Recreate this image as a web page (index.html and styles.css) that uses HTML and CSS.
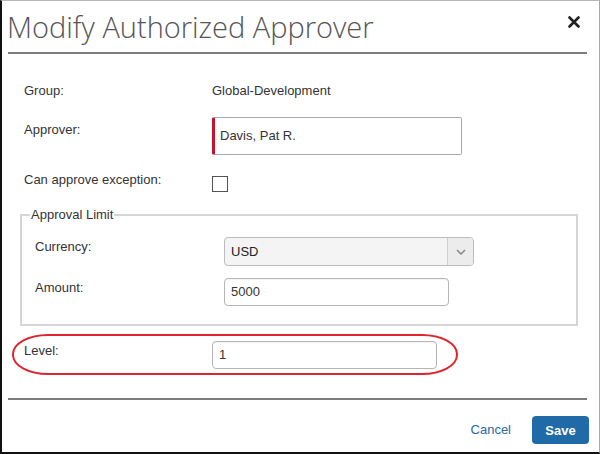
FILE: index.html
```html
<!DOCTYPE html>
<html>
<head>
<meta charset="utf-8">
<link rel="stylesheet" href="styles.css">
</head>
<body>
<div class="dialog">
  <div class="header">
    <h1 class="title">Modify Authorized Approver</h1>
    <svg class="close" width="12" height="12" viewBox="0 0 12 12"><path d="M1.5 1.5 L10.5 10.5 M10.5 1.5 L1.5 10.5" stroke="#222" stroke-width="2.6" stroke-linecap="round"/></svg>
  </div>
  <div class="body">
    <div class="row row-group">
      <div class="label">Group:</div>
      <div class="value">Global-Development</div>
    </div>
    <div class="row row-approver">
      <div class="label label-pad5">Approver:</div>
      <div class="input input-approver">Davis, Pat R.</div>
    </div>
    <div class="row row-check">
      <div class="label">Can approve exception:</div>
      <div class="checkbox"></div>
    </div>
    <fieldset class="limit">
      <legend class="legend">Approval Limit</legend>
      <div class="row row-currency">
        <div class="label label-fs label-pad2">Currency:</div>
        <div class="select">
          <span class="select-text">USD</span>
          <span class="select-btn"><svg width="10" height="6" viewBox="0 0 10 6"><path d="M1 1 L5 5 L9 1" fill="none" stroke="#888" stroke-width="1.5"/></svg></span>
        </div>
      </div>
      <div class="row row-amount">
        <div class="label label-fs label-pad2">Amount:</div>
        <div class="input input-round input-amount">5000</div>
      </div>
    </fieldset>
    <div class="row row-level">
      <div class="label label-pad2">Level:</div>
      <div class="input input-round input-level">1</div>
      <div class="highlight"></div>
    </div>
  </div>
  <div class="footer">
    <a class="cancel">Cancel</a>
    <button class="save">Save</button>
  </div>
</div>
</body>
</html>
```
FILE: styles.css
```css
html, body {
  margin: 0;
  padding: 0;
  background: #fff;
}
.dialog {
  width: 600px;
  height: 454px;
  box-sizing: border-box;
  border-left: 2px solid #111;
  border-bottom: 2px solid #111;
  border-top: 1px solid #b8b8b8;
  border-right: 1px solid #a8a8a8;
  font-family: "Liberation Sans", Arial, sans-serif;
  font-size: 13px;
  color: #333;
  overflow: hidden;
}
.header {
  display: flex;
  justify-content: space-between;
  align-items: flex-start;
  margin: 0 12px 0 6px;
  padding: 6px 0 5px 0;
  border-bottom: 2px solid #7d7d7d;
}
.title {
  margin: 0 0 0 -1px;
  font-family: "Open Sans", sans-serif;
  font-weight: 300;
  font-size: 29px;
  line-height: 40px;
  color: #555;
  letter-spacing: 0;
}
.close {
  margin-top: 9px;
  margin-right: 7px;
}
.body {
  padding-left: 22px;
}
.row {
  display: flex;
  align-items: flex-start;
  position: relative;
}
.label {
  width: 188px;
  flex: none;
  line-height: 16px;
}
.label-fs {
  width: 189px;
}
.label-pad5 { padding-top: 5px; }
.label-pad2 { padding-top: 2px; }
.value {
  line-height: 16px;
}
.row-group { margin-top: 29px; }
.row-approver { margin-top: 18px; }
.row-check { margin-top: 17px; }
.input {
  box-sizing: border-box;
  border: 1px solid #a9a9a9;
  background: #fff;
  line-height: 16px;
  color: #333;
}
.input-approver {
  width: 250px;
  height: 38px;
  padding: 10px 0 0 5px;
  border-left: 3px solid #c8102e;
  border-radius: 2px;
}
.input-round {
  border: 1px solid #b5b5b5;
  border-radius: 4px;
  height: 28px;
  width: 225px;
  padding: 5px 0 0 6px;
  box-shadow: inset 0 1px 1px rgba(0,0,0,0.05);
}
.checkbox {
  width: 16px;
  height: 16px;
  box-sizing: border-box;
  border: 1px solid #555;
  margin-top: 4px;
  background: #fff;
}
.limit {
  margin: 15px 0 0 -4px;
  width: 558px;
  box-sizing: border-box;
  border: 2px solid #d6d6d6;
  padding: 14px 0 18px 13px;
  min-width: 0;
}
.legend {
  margin-left: -5px;
  padding: 0 1px;
  line-height: 16px;
  color: #333;
}
.select {
  width: 250px;
  height: 29px;
  box-sizing: border-box;
  border: 1px solid #bcbcbc;
  border-radius: 4px;
  background: #f4f4f4;
  display: flex;
  align-items: stretch;
  overflow: hidden;
}
.select-text {
  flex: 1;
  padding: 6px 0 0 6px;
  line-height: 16px;
  color: #222;
}
.select-btn {
  width: 25px;
  border-left: 1px solid #cfcfcf;
  background: #ececec;
  display: flex;
  align-items: center;
  justify-content: center;
}
.row-amount { margin-top: 12px; }
.row-level { margin-top: 15px; }
.highlight {
  position: absolute;
  left: -12px;
  top: -7px;
  width: 446px;
  height: 41px;
  box-sizing: border-box;
  border: 2px solid #e0242c;
  border-radius: 36px / 20px;
}
.footer {
  margin: 29px 12px 0 6px;
  padding-top: 16px;
  border-top: 2px solid #7d7d7d;
  display: flex;
  justify-content: flex-end;
  align-items: center;
  gap: 21px;
}
.cancel {
  color: #2a68a3;
  font-size: 13px;
  line-height: 16px;
}
.save {
  margin-right: -2px;
  width: 57px;
  height: 28px;
  border: none;
  border-radius: 4px;
  background: #1f6aa7;
  color: #fff;
  font-family: "Liberation Sans", Arial, sans-serif;
  font-weight: bold;
  font-size: 13px;
  padding: 0;
}
```
